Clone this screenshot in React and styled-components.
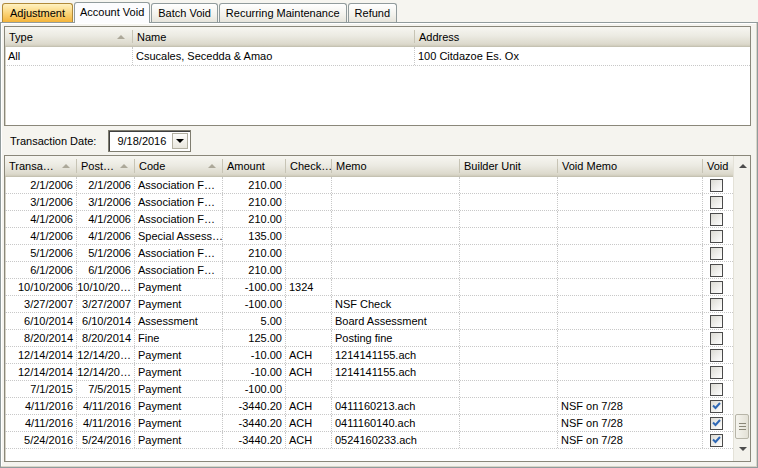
import React from "react";
import styled, { createGlobalStyle, css } from "styled-components";

const Global = createGlobalStyle`
  html, body { margin: 0; padding: 0; background: #f5f4ef; }
  body { font-family: Tahoma, "Liberation Sans", Arial, sans-serif; font-size: 11px; color: #000; }
  * { box-sizing: border-box; }
`;

const Screen = styled.div`
  width: 758px;
  height: 468px;
  display: flex;
  flex-direction: column;
  background: #f6f5f0;
  overflow: hidden;
`;

const TabStrip = styled.div`
  display: flex;
  align-items: flex-end;
  height: 22px;
  padding-left: 2px;
  gap: 1px;
  position: relative;
  z-index: 1;
`;

const Tab = styled.div`
  height: ${(p) => (p.$active ? 21 : 19)}px;
  padding: 0 ${(p) => p.$pad || 6}px;
  display: flex;
  align-items: center;
  border: 1px solid #919b9c;
  border-bottom: none;
  border-radius: 3px 3px 0 0;
  white-space: nowrap;
  margin-bottom: ${(p) => (p.$active ? -1 : 0)}px;
  background: linear-gradient(#ffffff, #f3f2ec 60%, #e7e5dc);
  ${(p) =>
    p.$active &&
    css`
      background: #fcfcfe;
      padding-bottom: 2px;
    `}
  ${(p) =>
    p.$warn &&
    css`
      background: linear-gradient(#fff2c2, #fbd57a 50%, #f4b43a);
      border-color: #b08a3a;
    `}
`;

const Panel = styled.div`
  flex: 1;
  border: 1px solid #919b9c;
  box-shadow: inset -1px -1px 0 #d8d5c8, inset 1px 1px 0 #ffffff;
  background: #f5f4ef;
  padding: 3px 6px 5px 3px;
  display: flex;
  flex-direction: column;
`;

const GridBox = styled.div`
  background: #fff;
  border: 1px solid #8a877a;
  box-shadow: inset 1px 1px 0 #d6d3c6;
  display: flex;
  flex-direction: column;
  ${(p) => p.$h && css`height: ${p.$h}px;`}
  ${(p) => p.$grow && css`flex: 1;`}
  position: relative;
  overflow: hidden;
`;

const HeaderRow = styled.div`
  display: grid;
  grid-template-columns: ${(p) => p.$cols};
  height: ${(p) => p.$h || 20}px;
  background: linear-gradient(#f7f6f1, #ecebe3 45%, #dcd9cc 90%, #cfcbbb);
  border-bottom: 1px solid #c5c2b2;
`;

const HeadCell = styled.div`
  position: relative;
  display: flex;
  align-items: center;
  padding: 0 4px;
  white-space: nowrap;
  overflow: hidden;
  color: #000;
  &::after {
    content: "";
    position: absolute;
    right: 0;
    top: 3px;
    bottom: 3px;
    width: 1px;
    background: #c7c4b5;
    box-shadow: 1px 0 0 #fff;
    display: ${(p) => (p.$noDiv ? "none" : "block")};
  }
`;

const SortArrow = styled.span`
  position: absolute;
  right: ${(p) => p.$r || 8}px;
  top: 8px;
  width: 0;
  height: 0;
  border-left: 4px solid transparent;
  border-right: 4px solid transparent;
  border-bottom: 4px solid #aca899;
`;

const Row = styled.div`
  display: grid;
  grid-template-columns: ${(p) => p.$cols};
  height: ${(p) => p.$h || 17}px;
  border-bottom: 1px dotted #c8c8c8;
`;

const Cell = styled.div`
  display: flex;
  align-items: center;
  justify-content: ${(p) => (p.$right ? "flex-end" : p.$center ? "center" : "flex-start")};
  padding: 0 3px 0 ${(p) => (p.$center ? 0 : 3)}px;
  white-space: nowrap;
  overflow: hidden;
  border-right: ${(p) => (p.$last ? "none" : "1px dotted #c8c8c8")};
`;

const DateRow = styled.div`
  height: 29px;
  display: flex;
  align-items: center;
  padding-left: 6px;
  gap: 12px;
`;

const Combo = styled.div`
  width: 83px;
  height: 22px;
  border: 1px solid #7f7d70;
  box-shadow: inset 1px 1px 0 #404040;
  background: #fff;
  display: flex;
  align-items: center;
  justify-content: space-between;
  padding: 2px 2px 2px 8px;
`;

const ComboBtn = styled.div`
  width: 16px;
  height: 16px;
  background: linear-gradient(#fdfdfb, #e8e6dd);
  border: 1px solid #b3b0a2;
  display: flex;
  align-items: center;
  justify-content: center;
  &::before {
    content: "";
    border-left: 4px solid transparent;
    border-right: 4px solid transparent;
    border-top: 4px solid #000;
  }
`;

const Body = styled.div`
  display: flex;
  flex: 1;
  min-height: 0;
`;

const Rows = styled.div`
  flex: 1;
  display: flex;
  flex-direction: column;
`;

const ScrollBar = styled.div`
  width: 17px;
  background: #f3f2ec;
  border-left: 1px solid #e4e2d8;
  position: relative;
`;

const ArrowGlyph = styled.span`
  position: absolute;
  left: 5px;
  ${(p) => (p.$down ? css`bottom: 10px;` : css`top: 8px;`)}
  width: 0;
  height: 0;
  border-left: 4px solid transparent;
  border-right: 4px solid transparent;
  ${(p) =>
    p.$down
      ? css`border-top: 4px solid #4d4d4d;`
      : css`border-bottom: 4px solid #4d4d4d;`}
`;

const Thumb = styled.div`
  position: absolute;
  left: 1px;
  right: 1px;
  bottom: 22px;
  height: 25px;
  border: 1px solid #b7b5a8;
  border-radius: 2px;
  background: linear-gradient(90deg, #f5f4ee, #e3e1d6);
  display: flex;
  flex-direction: column;
  align-items: center;
  justify-content: center;
  gap: 2px;
`;

const Grip = styled.span`
  width: 7px;
  height: 1px;
  background: #8a8778;
`;

const Check = styled.div`
  width: 13px;
  height: 13px;
  border: 1px solid #4b4b4b;
  background: linear-gradient(135deg, #dcdbd4, #ffffff);
  display: flex;
  align-items: center;
  justify-content: center;
`;

const Spacer = styled.div`
  flex: 1;
`;

const CheckMark = () => (
  <svg width="9" height="8" viewBox="0 0 9 8">
    <path d="M1 3.5 L3.5 6 L8 1" fill="none" stroke="#2f68b5" strokeWidth="2" />
  </svg>
);

const topCols = "128px 282px 1fr";
const botCols = "72px 58px 88px 63px 46px 128px 98px 145px 30px";

const rows = [
  ["2/1/2006", "2/1/2006", "Association F…", "210.00", "", "", "", "", false],
  ["3/1/2006", "3/1/2006", "Association F…", "210.00", "", "", "", "", false],
  ["4/1/2006", "4/1/2006", "Association F…", "210.00", "", "", "", "", false],
  ["4/1/2006", "4/1/2006", "Special Assess…", "135.00", "", "", "", "", false],
  ["5/1/2006", "5/1/2006", "Association F…", "210.00", "", "", "", "", false],
  ["6/1/2006", "6/1/2006", "Association F…", "210.00", "", "", "", "", false],
  ["10/10/2006", "10/10/20…", "Payment", "-100.00", "1324", "", "", "", false],
  ["3/27/2007", "3/27/2007", "Payment", "-100.00", "", "NSF Check", "", "", false],
  ["6/10/2014", "6/10/2014", "Assessment", "5.00", "", "Board Assessment", "", "", false],
  ["8/20/2014", "8/20/2014", "Fine", "125.00", "", "Posting fine", "", "", false],
  ["12/14/2014", "12/14/20…", "Payment", "-10.00", "ACH", "1214141155.ach", "", "", false],
  ["12/14/2014", "12/14/20…", "Payment", "-10.00", "ACH", "1214141155.ach", "", "", false],
  ["7/1/2015", "7/5/2015", "Payment", "-100.00", "", "", "", "", false],
  ["4/11/2016", "4/11/2016", "Payment", "-3440.20", "ACH", "0411160213.ach", "", "NSF on 7/28", true],
  ["4/11/2016", "4/11/2016", "Payment", "-3440.20", "ACH", "0411160140.ach", "", "NSF on 7/28", true],
  ["5/24/2016", "5/24/2016", "Payment", "-3440.20", "ACH", "0524160233.ach", "", "NSF on 7/28", true],
];

export default function App() {
  return (
    <Screen>
      <Global />
      <TabStrip>
        <Tab $warn $pad={7}>Adjustment</Tab>
        <Tab $active $pad={5}>Account Void</Tab>
        <Tab>Batch Void</Tab>
        <Tab>Recurring Maintenance</Tab>
        <Tab>Refund</Tab>
      </TabStrip>
      <Panel>
        <GridBox $h={100}>
          <HeaderRow $cols={topCols}>
            <HeadCell>Type<SortArrow $r={8} /></HeadCell>
            <HeadCell>Name</HeadCell>
            <HeadCell $noDiv>Address</HeadCell>
          </HeaderRow>
          <Row $cols={topCols} $h={19}>
            <Cell>All</Cell>
            <Cell>Csucales, Secedda &amp; Amao</Cell>
            <Cell $last>100 Citdazoe Es. Ox</Cell>
          </Row>
        </GridBox>
        <DateRow>
          <span>Transaction Date:</span>
          <Combo>
            <span>9/18/2016</span>
            <ComboBtn />
          </Combo>
        </DateRow>
        <GridBox $grow>
          <Body>
            <Rows>
              <HeaderRow $cols={botCols} $h={21}>
                <HeadCell>Transa…<SortArrow $r={7} /></HeadCell>
                <HeadCell>Post…<SortArrow $r={7} /></HeadCell>
                <HeadCell>Code<SortArrow $r={7} /></HeadCell>
                <HeadCell>Amount</HeadCell>
                <HeadCell>Check…</HeadCell>
                <HeadCell>Memo</HeadCell>
                <HeadCell>Builder Unit</HeadCell>
                <HeadCell>Void Memo</HeadCell>
                <HeadCell $noDiv>Void</HeadCell>
              </HeaderRow>
              {rows.map((r, i) => (
                <Row key={i} $cols={botCols}>
                  <Cell $right>{r[0]}</Cell>
                  <Cell $right>{r[1]}</Cell>
                  <Cell>{r[2]}</Cell>
                  <Cell $right>{r[3]}</Cell>
                  <Cell>{r[4]}</Cell>
                  <Cell>{r[5]}</Cell>
                  <Cell>{r[6]}</Cell>
                  <Cell>{r[7]}</Cell>
                  <Cell $center $last>
                    <Check>{r[8] && <CheckMark />}</Check>
                  </Cell>
                </Row>
              ))}
              <Spacer />
            </Rows>
            <ScrollBar>
              <ArrowGlyph />
              <Thumb>
                <Grip />
                <Grip />
                <Grip />
              </Thumb>
              <ArrowGlyph $down />
            </ScrollBar>
          </Body>
        </GridBox>
      </Panel>
    </Screen>
  );
}
